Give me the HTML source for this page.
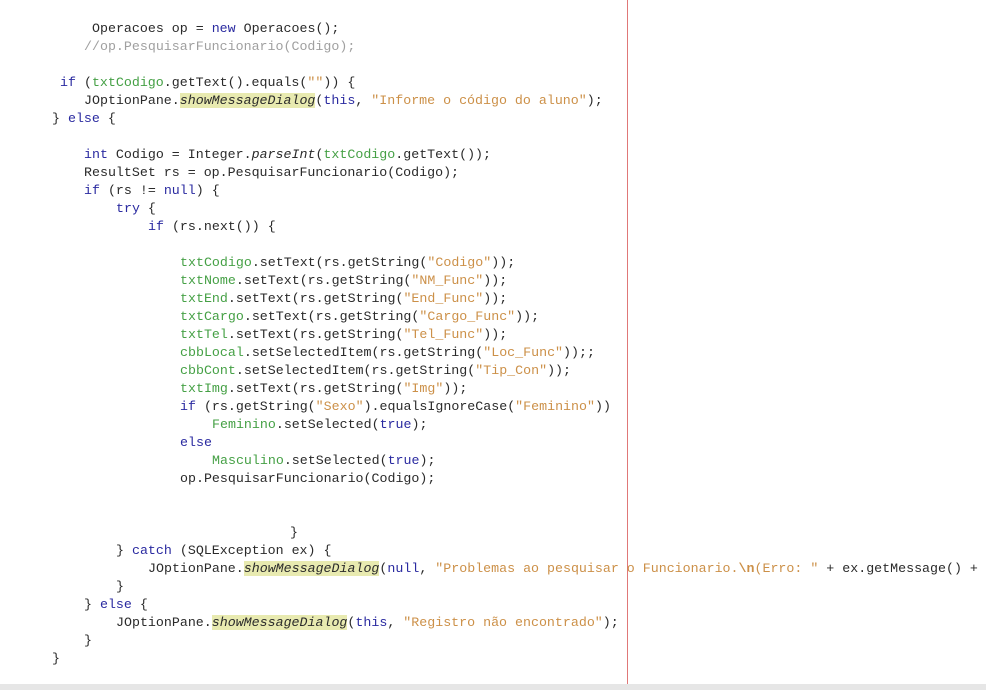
<!DOCTYPE html>
<html><head><meta charset="utf-8"><style>
html,body{margin:0;padding:0;background:#fff;width:986px;height:690px;overflow:hidden;position:relative}
.l{position:absolute;white-space:pre;font-family:"Liberation Mono","DejaVu Sans Mono",monospace;font-size:13.3px;line-height:18px;color:#2a2a2a;letter-spacing:0}
.k{color:#2a2aa0}
.g{color:#45a045}
.s{color:#cc9048}
.c{color:#a0a0a0}
.m{font-style:italic;background:#e8eab0}
.i{font-style:italic}
#red{position:absolute;left:627px;top:0;width:1px;height:690px;background:#e07878}
#bar{position:absolute;left:0;top:684px;width:986px;height:6px;background:#e6e6e6}
</style></head><body>
<div id="red"></div>
<div class="l" style="left:92px;top:20px">Operacoes op = <span class="k">new</span> Operacoes();</div>
<div class="l c" style="left:84px;top:38px">//op.PesquisarFuncionario(Codigo);</div>
<div class="l" style="left:60px;top:74px"><span class="k">if</span> (<span class="g">txtCodigo</span>.getText().equals(<span class="s">""</span>)) {</div>
<div class="l" style="left:84px;top:92px">JOptionPane.<span class="m">showMessageDialog</span>(<span class="k">this</span>, <span class="s">"Informe o código do aluno"</span>);</div>
<div class="l" style="left:52px;top:110px">} <span class="k">else</span> {</div>
<div class="l" style="left:84px;top:146px"><span class="k">int</span> Codigo = Integer.<span class="i">parseInt</span>(<span class="g">txtCodigo</span>.getText());</div>
<div class="l" style="left:84px;top:164px">ResultSet rs = op.PesquisarFuncionario(Codigo);</div>
<div class="l" style="left:84px;top:182px"><span class="k">if</span> (rs != <span class="k">null</span>) {</div>
<div class="l" style="left:116px;top:200px"><span class="k">try</span> {</div>
<div class="l" style="left:148px;top:218px"><span class="k">if</span> (rs.next()) {</div>
<div class="l" style="left:180px;top:254px"><span class="g">txtCodigo</span>.setText(rs.getString(<span class="s">"Codigo"</span>));</div>
<div class="l" style="left:180px;top:272px"><span class="g">txtNome</span>.setText(rs.getString(<span class="s">"NM_Func"</span>));</div>
<div class="l" style="left:180px;top:290px"><span class="g">txtEnd</span>.setText(rs.getString(<span class="s">"End_Func"</span>));</div>
<div class="l" style="left:180px;top:308px"><span class="g">txtCargo</span>.setText(rs.getString(<span class="s">"Cargo_Func"</span>));</div>
<div class="l" style="left:180px;top:326px"><span class="g">txtTel</span>.setText(rs.getString(<span class="s">"Tel_Func"</span>));</div>
<div class="l" style="left:180px;top:344px"><span class="g">cbbLocal</span>.setSelectedItem(rs.getString(<span class="s">"Loc_Func"</span>));;</div>
<div class="l" style="left:180px;top:362px"><span class="g">cbbCont</span>.setSelectedItem(rs.getString(<span class="s">"Tip_Con"</span>));</div>
<div class="l" style="left:180px;top:380px"><span class="g">txtImg</span>.setText(rs.getString(<span class="s">"Img"</span>));</div>
<div class="l" style="left:180px;top:398px"><span class="k">if</span> (rs.getString(<span class="s">"Sexo"</span>).equalsIgnoreCase(<span class="s">"Feminino"</span>))</div>
<div class="l" style="left:212px;top:416px"><span class="g">Feminino</span>.setSelected(<span class="k">true</span>);</div>
<div class="l" style="left:180px;top:434px"><span class="k">else</span></div>
<div class="l" style="left:212px;top:452px"><span class="g">Masculino</span>.setSelected(<span class="k">true</span>);</div>
<div class="l" style="left:180px;top:470px">op.PesquisarFuncionario(Codigo);</div>
<div class="l" style="left:290px;top:524px">}</div>
<div class="l" style="left:116px;top:542px">} <span class="k">catch</span> (SQLException ex) {</div>
<div class="l" style="left:148px;top:560px">JOptionPane.<span class="m">showMessageDialog</span>(<span class="k">null</span>, <span class="s">"Problemas ao pesquisar o Funcionario.<b>\n</b>(Erro: "</span> + ex.getMessage() + </div>
<div class="l" style="left:116px;top:578px">}</div>
<div class="l" style="left:84px;top:596px">} <span class="k">else</span> {</div>
<div class="l" style="left:116px;top:614px">JOptionPane.<span class="m">showMessageDialog</span>(<span class="k">this</span>, <span class="s">"Registro não encontrado"</span>);</div>
<div class="l" style="left:84px;top:632px">}</div>
<div class="l" style="left:52px;top:650px">}</div>
<div id="bar"></div>
</body></html>
